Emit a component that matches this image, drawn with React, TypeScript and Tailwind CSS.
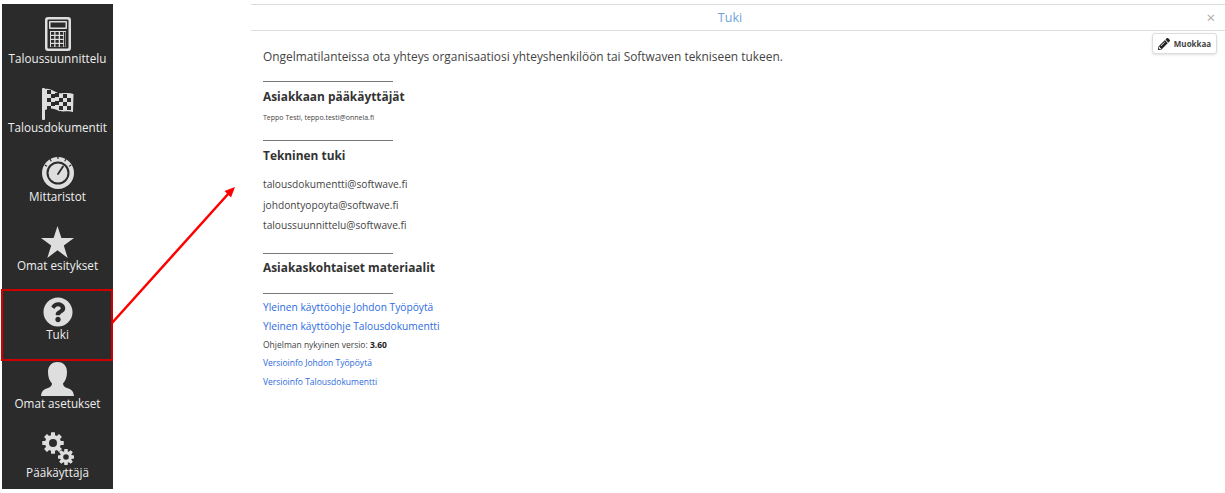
import { FaPencilAlt, FaQuestionCircle } from 'react-icons/fa'

const SIDEBAR = '#2b2b2b'

function CalculatorIcon() {
  const cols = [6, 10.500, 15]
  const rows = [15, 19, 23, 27]
  return (
    <svg width="26" height="34" viewBox="0 0 26 34">
      <rect width="26" height="34" rx="3" fill="currentColor" />
      <rect x="2.500" y="2.500" width="21" height="29" rx="1" fill={SIDEBAR} />
      <rect x="4" y="4" width="18" height="8" rx="1" fill="currentColor" />
      <rect x="5.500" y="5.500" width="15" height="5" fill={SIDEBAR} />
      <rect x="5" y="14" width="16" height="16" fill="currentColor" />
      {cols.map((x) =>
        rows.map((y) => <rect key={`${x}-${y}`} x={x} y={y} width="3.200" height="2.800" fill={SIDEBAR} />),
      )}
      <rect x="19" y="15" width="1.500" height="14.800" fill={SIDEBAR} />
    </svg>
  )
}

function FlagIcon() {
  const squares: [number, number][] = [
    [5, 2], [13, 5], [21, 6], [9, 6], [17, 10], [25, 10], [5, 10], [13, 13], [21, 14], [9, 14], [17, 18], [25, 18], [5, 18],
  ]
  return (
    <svg width="32" height="32" viewBox="0 0 32 32">
      <rect x="0" y="0" width="3" height="32" rx="1" fill="currentColor" />
      <path d="M3 1 C8 0 11 3 16 5 C20 6 26 4 31.500 6 L31 24 C26 22 20 25 15 22 C11 20 7 20 3 22z" fill="currentColor" />
      {squares.map(([x, y]) => (
        <rect key={`${x}-${y}`} x={x} y={y} width="4" height="4" fill={SIDEBAR} />
      ))}
    </svg>
  )
}

function GaugeIcon() {
  return (
    <svg width="32" height="33" viewBox="0 0 32 33" fill="none">
      <circle cx="16" cy="17" r="16" fill="currentColor" />
      <circle cx="16" cy="17" r="10.500" stroke={SIDEBAR} strokeWidth="2" />
      <path d="M16 18 L21 10.500" stroke={SIDEBAR} strokeWidth="1.800" strokeLinecap="round" />
      <path d="M16 0.500v2.500M8 3l1.300 2.300M24 3l-1.300 2.300M2.800 9l2.200 1.300M29.200 9L27 10.300" stroke={SIDEBAR} strokeWidth="1.200" />
    </svg>
  )
}

function StarIcon() {
  return (
    <svg width="33" height="32" viewBox="0 0 33 32" fill="currentColor">
      <path d="M16.500 0 L20.400 12 L33 12 L22.800 19.500 L26.700 32 L16.500 24.300 L6.300 32 L10.200 19.500 L0 12 L12.600 12z" />
    </svg>
  )
}

function UserIcon() {
  return (
    <svg width="33" height="34" viewBox="0 0 33 34" fill="currentColor">
      <path d="M16.500 0 C23 0 26 4.500 26 10 C26 15 24.500 19 22 21.500 C22 24 23.500 25 26 26 C30 27.300 32.500 29 33 34 H0 C0.500 29 3 27.300 7 26 C9.500 25 11 24 11 21.500 C8.500 19 7 15 7 10 C7 4.500 10 0 16.500 0z" />
    </svg>
  )
}

function Gear({ cx, cy, r, hole, teeth, w }: { cx: number; cy: number; r: number; hole: number; teeth: number; w: number }) {
  const angles = Array.from({ length: teeth }, (_, i) => (i * 360) / teeth)
  return (
    <g>
      {angles.map((a) => (
        <rect key={a} x={cx - w / 2} y={cy - r} width={w} height={r * 2} rx="0.500" transform={`rotate(${a} ${cx} ${cy})`} fill="currentColor" />
      ))}
      <circle cx={cx} cy={cy} r={r * 0.76} fill="currentColor" />
      <circle cx={cx} cy={cy} r={hole} fill={SIDEBAR} />
    </g>
  )
}

function CogsIcon() {
  return (
    <svg width="32" height="33" viewBox="0 0 32 33">
      <Gear cx={11} cy={11} r={10.500} hole={4} teeth={8} w={4} />
      <Gear cx={24} cy={25} r={8} hole={2.800} teeth={8} w={3} />
    </svg>
  )
}

const items = [
  { label: 'Taloussuunnittelu', icon: <CalculatorIcon /> },
  { label: 'Talousdokumentit', icon: <FlagIcon /> },
  { label: 'Mittaristot', icon: <GaugeIcon /> },
  { label: 'Omat esitykset', icon: <StarIcon /> },
  { label: 'Tuki', icon: <FaQuestionCircle size={30} /> },
  { label: 'Omat asetukset', icon: <UserIcon /> },
  { label: 'Pääkäyttäjä', icon: <CogsIcon /> },
]

function Rule() {
  return <div className="w-[130px] border-b border-[#777]" />
}

export default function App() {
  return (
    <div className="relative flex h-[493px] w-[1225px] overflow-hidden bg-white font-['Open_Sans',sans-serif] text-[#444]">
      {/* Sidebar */}
      <aside className="mb-[4px] ml-[2px] mt-[4px] w-[111px] shrink-0 bg-[#2b2b2b] pt-[9px] text-[#dedede]">
        {items.map((item) => (
          <div key={item.label} className="flex h-[69px] flex-col items-center">
            <div className="flex h-[38px] items-end justify-center">{item.icon}</div>
            <div className="mt-[-1px] text-[11.700px] leading-[17px] text-[#eee]">{item.label}</div>
          </div>
        ))}
      </aside>

      {/* Main */}
      <main className="ml-[138px] mt-[4px] flex-1">
        <div className="relative h-[27px] border-y border-[#ddd] pr-[16px] text-center text-[12.500px] leading-[25px] text-[#6fa3d8]">
          Tuki
          <span className="absolute right-[10px] top-0 text-[15px] leading-[25px] text-[#aaa]">×</span>
        </div>
        <div className="relative pl-[12px] pt-[15px]">
          <button className="absolute right-[8px] top-[2px] flex h-[21px] w-[65px] items-center justify-center gap-[4px] rounded-[3px] border border-[#ddd] bg-white text-[8px] font-bold text-[#444] shadow-sm">
            <FaPencilAlt size={12} className="text-[#222]" />
            Muokkaa
          </button>
          <p className="text-[11.900px] leading-[20px]">
            Ongelmatilanteissa ota yhteys organisaatiosi yhteyshenkilöön tai Softwaven tekniseen tukeen.
          </p>
          <div className="mt-[15px]">
            <Rule />
          </div>
          <h2 className="mt-[4px] text-[11.900px] font-bold leading-[20px] text-[#333]">Asiakkaan pääkäyttäjät</h2>
          <p className="mt-[6px] text-[7px] leading-[12px]">Teppo Testi, teppo.testi@onnela.fi</p>
          <div className="mt-[16px]">
            <Rule />
          </div>
          <h2 className="mt-[4px] text-[11.900px] font-bold leading-[20px] text-[#333]">Tekninen tuki</h2>
          <div className="mt-[9px] text-[10.200px] leading-[20.500px]">
            <p>talousdokumentti@softwave.fi</p>
            <p>johdontyopoyta@softwave.fi</p>
            <p>taloussuunnittelu@softwave.fi</p>
          </div>
          <div className="mt-[17px]">
            <Rule />
          </div>
          <h2 className="mt-[3px] text-[11.900px] font-bold leading-[20px] text-[#333]">Asiakaskohtaiset materiaalit</h2>
          <div className="mt-[16px]">
            <Rule />
          </div>
          <div className="mt-[4px] text-[10.200px] leading-[19px] text-[#2d6be0]">
            <p>Yleinen käyttöohje Johdon Työpöytä</p>
            <p>Yleinen käyttöohje Talousdokumentti</p>
          </div>
          <p className="text-[8.500px] leading-[18.500px]">
            Ohjelman nykyinen versio: <b className="text-[#222]">3.60</b>
          </p>
          <p className="text-[8.500px] leading-[18.500px] text-[#2d6be0]">Versioinfo Johdon Työpöytä</p>
          <p className="text-[8.500px] leading-[18.500px] text-[#2d6be0]">Versioinfo Talousdokumentti</p>
        </div>
      </main>

      {/* Annotation */}
      <div className="absolute left-[1px] top-[289px] h-[72px] w-[112px] border-2 border-[#d00000]" />
      <svg className="absolute left-0 top-0" width="300" height="400" viewBox="0 0 300 400">
        <path d="M112 323 L229 193" stroke="#ff0000" strokeWidth="2.500" fill="none" />
        <path d="M235 187 L224.500 191 L231 197.500z" fill="#ff0000" />
      </svg>
    </div>
  )
}
